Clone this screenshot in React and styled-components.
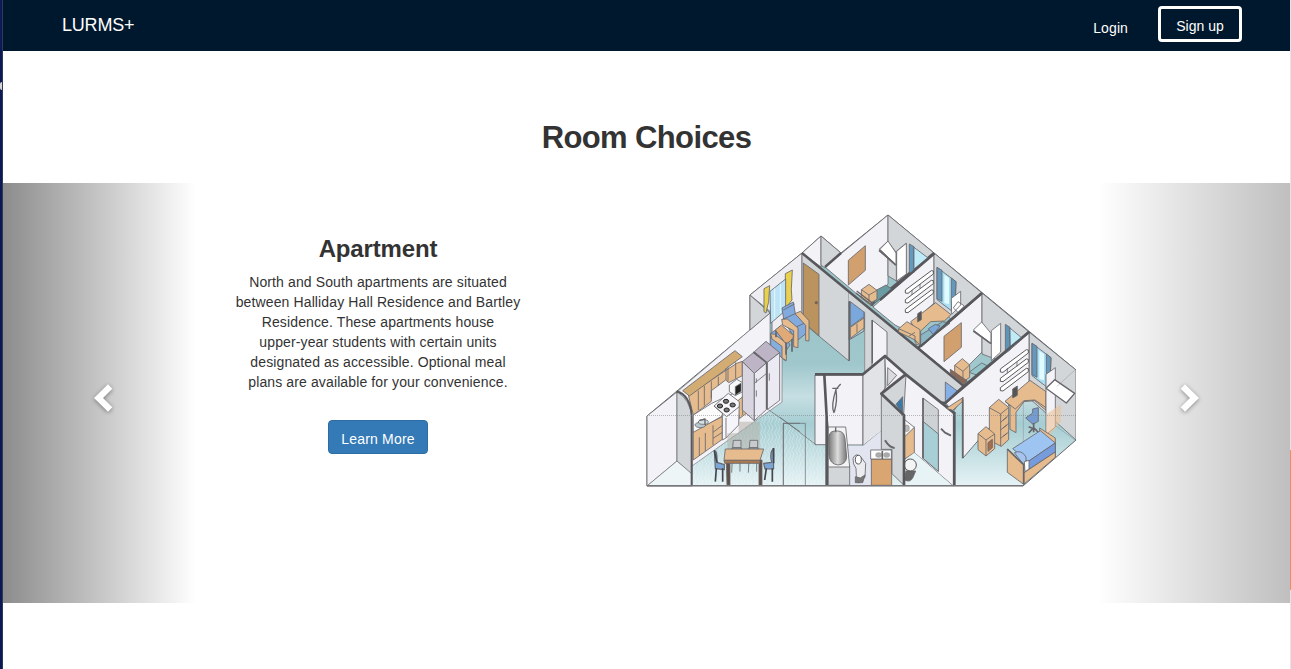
import React from 'react';
import styled, { createGlobalStyle } from 'styled-components';

const Global = createGlobalStyle`
  * { box-sizing: border-box; }
  body { margin: 0; background: #fff; color: #333; overflow: hidden;
    font: 14px/20px "Liberation Sans", Arial, sans-serif; }
`;
const Frame = styled.div`
  display: grid; grid-template-columns: 3px 1287px 1px; height: 669px;
`;
const LeftEdge = styled.div`
  background: #0b1a52; border-right: 1px solid #30385a; padding-top: 82px;
`;
const EdgeMark = styled.div`
  width: 2px; height: 8px; background: #d5d5d5; border-radius: 2px 0 0 2px;
`;
const RightEdge = styled.div`
  background: #e4e4e4; padding-top: 450px;
`;
const EdgeAccent = styled.div`height: 140px; background: #f58a5e;`;
const Page = styled.main`display: flex; flex-direction: column;`;
const Nav = styled.nav`
  height: 51px; background: #00182d; color: #fff; display: flex;
  align-items: flex-start; padding: 6px 48px 0 59px;
`;
const Brand = styled.a`font-size: 18px; margin-top: 9px; margin-right: auto; letter-spacing: -.2px;`;
const Login = styled.a`margin: 12px 30px 0 0; letter-spacing: .1px;`;
const SignUp = styled.a`
  width: 84px; height: 36px; border: 3px solid #fff; border-radius: 4px;
  text-align: center; line-height: 34px;
`;
const Title = styled.h1`
  margin: 70px 0 0; height: 62px; font-size: 31px; line-height: 34px; text-align: center;
  letter-spacing: -.62px;
`;
const Carousel = styled.section`
  height: 420px; display: grid; grid-template-columns: 193px 364px 86px 430px 21px 193px;
`;
const Control = styled.button`
  grid-row: 1; grid-column: ${p => (p.$next ? 6 : 1)};
  border: 0; padding: 0; display: flex; align-items: center;
  justify-content: ${p => (p.$next ? 'flex-end' : 'flex-start')};
  background: linear-gradient(to ${p => (p.$next ? 'left' : 'right')},
    rgba(0,0,0,${p => (p.$next ? 0.25 : 0.45)}), rgba(0,0,0,0));
`;
const Chevron = styled.svg`
  width: 20px; height: 30px; margin: 10px 90px 0; overflow: visible;
  filter: drop-shadow(0 1px 2px rgba(0,0,0,.4));
`;
const Copy = styled.article`
  display: flex; flex-direction: column; align-items: center; text-align: center; padding-top: 53px;
`;
const RoomName = styled.h2`margin: 0 0 10px; font-size: 24px; line-height: 26px; letter-spacing: -.15px;`;
const Description = styled.p`margin: 0 0 28px; white-space: nowrap; letter-spacing: .12px;`;
const LearnMore = styled.button`
  width: 100px; height: 34px; padding: 4px 0 0; border: 1px solid #2e6da4; border-radius: 4px;
  background: #337ab7; color: #fff; font: inherit; letter-spacing: .2px;
`;
const Plan = styled.svg`
  grid-row: 1; grid-column: 4; width: 430px; height: 274px; margin-top: 30px; display: block;
`;

const ink = '#66666b';
const wood = '#e6bb8d';
const white = '#f3f2f7';
const grey = '#d3d6d8';

const P = ({ d, f = 'none', s = ink, w = 2.5, ...rest }) => (
  <path d={d} fill={f} stroke={s} strokeWidth={w} strokeLinejoin="round" {...rest} />
);
const Area = ({ x, y, children }) => (
  <g transform={`translate(${x} ${y}) scale(.33333)`}>{children}</g>
);

const Walls = () => (
  <g>
    <P w={1} f="url(#floor)" d="M647 486V416L750 330V295L802 253L821 236L841 253L888 215L1076 370V440L1023 486Z" />
    <P w={.8} f={white} d="M647 416L677 392V461L647 486Z" />
    <P w={.6} f="#edf5f7" d="M647 486L677 461L692 473V486Z" />
    <P w={.6} f={white} d="M677 392L770 313V345L782 352V402L692 466Z" />
    <P w={.7} f={grey} d="M677 392Q690 399 692 418V474L677 461Z" />
    <P w={.8} f={grey} d="M750 295L770 313L750 330Z" />
    <P w={.8} f="#eeeef2" d="M750 295L802 253V322L772 346V313Z" />
    <P w={.8} f={grey} d="M802 253L849 291V361L802 322Z" />
    <P w={.8} f={white} d="M802 253L821 236V267Z" />
    <P w={.8} f={grey} d="M821 236L841 253L825 268L821 265Z" />
    <P w={.8} f={white} d="M825 267L888 215V284L871 306Z" />
    <P w={.8} f={grey} d="M888 215L934 253L900 283L888 276Z" />
    <P w={.8} f={white} d="M873 307L934 253V303L905 330L895 325Z" />
    <P w={.8} f={grey} d="M934 253L982 293L952 320L934 303Z" />
    <P w={.8} f={white} d="M918 347L982 293V352L962 372L950 374Z" />
    <P w={.8} f={grey} d="M982 293L1029 332L998 360L982 354Z" />
    <P w={.8} f={grey} d="M1029 332L1076 370V440L1056 422L1029 398Z" />
    <P w={.9} f={white} d="M945 402L1029 332V382L963 458V397L953 412Z" />
    <P w={.8} s="none" f={grey} d="M864 303L965 387L945 404L885 356L864 373Z" />
    <P w={.9} s="none" f={grey} d="M849 291L866 304V316L849 302Z" />
    <P w={.9} f="#add0dc" d="M849 302L864 314V331L849 340Z" />
    <P w={.9} f={white} d="M872 320L887 332V356L872 366Z" />
    <P w={2.5} s="#58585c" d="M802 253L965 387M825 267L841 253M871 305L934 253M918 348L982 293M937 402L945 403L1029 332" />
  </g>
);

const Kitchen = () => (
  <Area x={640} y={330}>
    <P f={wood} d="M145 195L290 100L307 94V137L266 158L257 150L214 182V214L160 255Z" />
    <P f="#d2ac72" d="M128 182L285 62L307 80L262 113L258 118L148 198Z" />
    <P d="M175 182V240M193 168V227M214 154V205M235 140V167M258 114V150M264 110V155M287 97V146" />
    <P f={wood} d="M160 303L247 260V328L160 390ZM291 211L327 184V244L298 266Z" />
    <P f="#fbfbfb" d="M160 255L215 220L315 174L327 184L295 211L250 235L247 258L160 307Z" />
    <P f="#f6f6fa" d="M222 228L265 190L298 215L296 285L258 324L247 330V250Z" />
    <g fill="#777" stroke="#222" strokeWidth="3">
      <ellipse cx="240" cy="228" rx="8" ry="6" /><ellipse cx="258" cy="214" rx="8" ry="6" />
      <ellipse cx="260" cy="240" rx="8" ry="6" /><ellipse cx="278" cy="225" rx="8" ry="6" />
    </g>
    <P d="M222 228L260 260L298 230M258 264V323" />
    <ellipse cx="181" cy="285" rx="16" ry="8" fill="#b8c7cd" stroke="#555" strokeWidth="2" />
    <ellipse cx="190" cy="276" rx="15" ry="7" fill="#d5e0e5" stroke="#555" strokeWidth="2" /><P w={4} d="M195 285V267L178 272" />
    <P d="M178 322V377M196 309V363M219 286V345M219 307L247 286M219 325L247 307M308 205V255" />
    <P f="#f8f8fa" d="M268 165L290 148L308 158V185L286 197L268 185Z" /><P f="#222" d="M286 170L303 160V184L286 195Z" />
    <P f="#bdb5c6" d="M307 95L340 68L380 98L343 130ZM343 65L378 34L419 68L381 98Z" />
    <P f="#d8d4e0" d="M307 95L343 130V272L307 240Z" />
    <P f="#ebe9f2" d="M343 130L380 98V238L343 272ZM382 97L419 68V211L382 239Z" />
    <P d="M343 160L380 130M349 145V158M349 181V200M388 130V152" /><P w={5} d="M340 66L380 98V238" />
    <P f="#b5b1a7" opacity=".55" s="none" d="M296 275H359V360H262V310H296Z" />
    <P d="M385 239L480 305M430 466V280H480" w={2} />
    {[278, 328].map(x => <g key={x} transform={`translate(${x} 329)`}>
      <P f="#c9c9d0" d="M0 24L2 2H25V24ZM-2 25H27L22 38H0ZM0 38L-3 99M22 38V96" /></g>)}
    <P f="#5f4f45" d="M259 390H270V465H261ZM357 390H366V465H357Z" />
    <P f={wood} d="M256 357H371L360 391H252Z" /><P f="#ad7950" d="M252 391H360V400H254Z" />
    <P f="#7ba7d8" w={3.5} d="M223 362Q232 360 231 397L253 404V419L226 416ZM399 356Q388 370 395 397L371 400L375 417H401Z" />
    <P w={5} s="#424650" d="M229 415L226 455M248 415V455M379 415L374 450M397 415V455M223 362L231 398M401 354V400" />
    <P w={6} s="#58585c" d="M110 184Q150 196 155 255V467" />
  </Area>
);

const Living = () => (
  <Area x={740} y={205}>
    <P f="#ead14d" d="M72 251L89 242L86 290L78 324L72 320ZM136 206L157 195L154 253L156 285L136 310Z" />
    <P f="#bde4f5" d="M90 259L137 222V316L92 355Z" /><P s="#e8faff" d="M104 250V341M121 237V325" />
    <P f="#bb935f" d="M190 174L237 208V393L190 350Z" /><circle cx="229" cy="293" r="5" fill="#765" />
    <P f="#85aedd" d="M92 385L121 365L150 420L136 440V467L92 430Z" />
    <P f="#82aadd" d="M126 309L160 291L166 326L205 347L205 380L170 408L132 349Z" />
    <P d="M130 315L164 297M128 343L166 326M160 370L203 350" />
    <P f={wood} d="M125 343L142 342L174 369V428L161 425V377L128 360ZM165 326L181 319L207 347V408L197 407V361ZM92 386L104 388L139 414V467L126 459V424L96 402Z" />
    <P f="#dfaa78" d="M106 375L124 360L161 392L157 404L138 417Z" /><P w={5} d="M108 378V397M138 412V449M156 402V440" />
    <P f="#d2a06f" d="M325 166L376 122V196L325 240Z" />
    <P f="#6b9ca4" d="M397 262L438 240L456 253L404 294Z" />
    <P f={wood} d="M364 254L387 238L411 256V283L388 296L364 279Z" /><P d="M364 254L387 270L411 256M387 270V291" />
    <P w={4} d="M348 264L400 304M350 258L402 298" />
    <P f="#fff" d="M417 133L443 109L469 143V180Z" /><P f="#f8f8fb" d="M469 139L498 115V207L469 228Z" /><P w={5} d="M417 136L468 180" />
    <P f="#7ba8dc" d="M331 290L372 321V335L331 365Z" /><P f={wood} d="M331 367L372 339V369L331 400Z" /><P d="M351 357V383" />
    <P w={4} d="M328 288V467M397 345V475" /><P w={2} d="M374 320V500" />
  </Area>
);

const Shelf = ({ x, y }) => (
  <g transform={`translate(${x} ${y})`}><P f="#fff" w={2.8} s="#505054" d="M0 65L78 7L84 8V17L8 75L0 74Z" /></g>
);
const Curtain = ({ x, y }) => (
  <g transform={`translate(${x} ${y})`}>
    <P f="#a9dff3" d="M0 0L57 43L55 106L43 130L0 97Z" /><P s="none" f="#e1faff" d="M22 22L36 32V111L22 107Z" />
    <P f="#6598bc" d="M0 0L15 9V102L0 94ZM43 32L57 43L55 90L43 130Z" />
  </g>
);
const Bedrooms = () => (
  <Area x={880} y={205}>
    <P f="#6299bd" d="M88 117L102 125V202L88 204Z" /><P f="#bfeaf8" d="M102 127L143 158L102 192Z" />
    <P f="#fff" d="M0 133L24 108L48 144V180ZM50 139L79 115V207L50 228Z" /><P w={5} d="M0 137L48 180" />
    <P d="M96 250V270M120 235V250" /><Shelf x={76} y={190} /><Shelf x={76} y={219} /><Shelf x={76} y={248} />
    <Curtain x={171} y={187} />
    <P f="#fff" d="M214 280L242 259V300L215 328ZM220 309L234 290L253 303L234 322Z" />
    <P f="#8bb7c4" d="M120 391L188 350L210 355L122 421Z" />
    <P f={wood} d="M92 350L167 293L213 329L193 348L152 350L122 378V414L108 420V378Z" />
    <P f={wood} d="M56 371L81 350L120 374V419L105 405L56 381Z" /><P d="M56 371L105 393V412M86 394L105 382" />
    <P f="#7aa8da" d="M145 371L166 358L180 363L160 389Z" /><P f="#555" d="M113 326L124 319V344L113 351Z" />
    <P f="#d2a06f" d="M192 394L244 353V427L192 470Z" />
    <P f="#fff" d="M280 375L305 351L333 385V416ZM334 377L362 355V441L334 467Z" /><P w={5} d="M280 378L333 416" />
    <P f="#5d95b8" d="M376 358L390 367V435L376 445Z" /><P f="#bfeaf8" d="M390 369L428 401L391 433Z" />
    <P f="#94c4ca" d="M267 502L305 474L323 483L290 510Z" />
    <P w={7} s="#58585c" d="M122 424L305 265M0 285L163 146" />
  </Area>
);

const Study = () => (
  <Area x={900} y={340}>
    <Shelf x={301} y={22} /><Shelf x={301} y={50} /><Shelf x={301} y={78} />
    <P d="M322 84V100M351 65V80" /><Curtain x={396} y={10} />
    <P f={wood} d="M315 184L390 121L438 155V211L404 182L372 185L348 217V278L330 268V198Z" />
    <P d="M315 184L346 207L372 182L405 180L438 203" /><P f="#555" d="M338 147L352 138V166L338 174Z" />
    <P f={wood} d="M268 203L296 178L326 202V299L304 319L268 301Z" />
    <P d="M268 203L302 222L326 202M302 222V319M302 247L326 225M302 270L326 250M302 295L326 276M309 241L321 232M309 264L321 255M309 289L321 280" />
    <P f={wood} d="M234 281L258 260L284 282V326L258 348L234 329Z" /><P d="M234 281L258 300L284 282M258 300V347" /><P f="#a86f4d" d="M264 308L277 298V323L264 334Z" />
    <P f="#759bd0" d="M377 234L398 219V207L415 203V244L399 253Z" /><P w={5} d="M401 249V277M386 279L401 263L420 282M386 260L410 270" />
    <P f={white} d="M438 103L466 83V261L438 284Z" /><P f="#ecc198" opacity=".6" s="none" d="M440 222L483 193V244L437 302Z" />
    <P f="#fff" w={4} d="M438 145L464 119L524 160L499 189Z" />
    <P w={1.5} opacity=".6" d="M370 184V330M470 140L525 90M466 257L525 300" />
    <P f={wood} d="M419 264L466 294V352L419 305Z" />
    <P f="#9ec4f1" d="M338 326L421 272L466 309L384 365Z" /><P f="#779cdd" d="M384 365L466 309V336L386 388Z" />
    <P f={wood} d="M322 327L371 374V433L322 397ZM371 399L466 336V352L371 433Z" /><P f="#a5c5ef" d="M343 338Q365 328 378 351V363L371 374Z" /><P f="#fff" d="M373 365L387 361V387L375 395Z" /><P w={5} d="M322 327L371 374V433" />
    <P f="#86afe5" d="M136 126L172 153L136 187Z" /><P f={wood} d="M139 205L187 174V185L158 211Z" />
    <P f={wood} d="M164 76L187 56L209 75V112L189 126L164 109Z" /><P d="M164 76L189 94L209 75M189 94V125" /><P f="#8c6756" d="M151 88L202 123L192 133L151 99Z" />
    <P w={5} d="M188 178V355" /><P w={7} s="#58585c" d="M135 190L190 139L387 -24" />
  </Area>
);

const Bathroom = () => (
  <Area x={780} y={345}>
    <P f={white} d="M105 90H249V300H151L142 220V299H105Z" />
    <P f="#e1e3e6" d="M249 87L315 36V250L249 302Z" />
    <P s="none" f="#e2e5f0" d="M205 302H249L303 258V422H209Z" />
    <P f={white} d="M315 36L520 203V423L403 323L374 343V250L304 146L318 125Z" />
    <P f="#d9dbde" d="M323 68L350 91L323 122Z" />
    <P f={grey} d="M304 146L378 89L371 210Z" />
    <P f={wood} d="M373 268L403 246V323L373 343Z" /><P f="#fafafa" d="M373 223L403 247L373 276Z" /><ellipse cx="380" cy="250" rx="8" ry="10" fill="#bbb" stroke="#555" />
    <P f="#3c79a5" d="M348 178L368 155V204Z" />
    <P f="#e7f3f5" s="none" d="M374 344L403 323L519 423H374Z" />
    <P f={grey} d="M145 363H209V421H145Z" /><P f="#f4f4f5" d="M145 246H197L209 366H145Z" />
    <P f="url(#tub)" d="M146 274Q151 255 173 258Q192 258 195 280L200 337Q198 358 174 360Q149 357 147 331Z" />
    <P w={4} d="M162 204Q152 183 168 133L182 117M157 130H175M168 136Q173 165 163 201M167 247V262" />
    <P f="#ececf0" d="M219 340Q228 320 244 338L257 355L255 397L236 414Q226 391 228 370Q218 358 219 340Z" /><P f="#777" d="M226 395L241 399L255 390L248 413H226Z" /><ellipse cx="235" cy="344" rx="9" ry="13" fill="#fff" stroke="#555" strokeWidth="3" />
    <P f="#d9a570" d="M274 342H335V421H274Z" /><P f="#fff" d="M272 315H334V342H272Z" /><ellipse cx="296" cy="330" rx="10" ry="8" fill="#aaa" /><ellipse cx="320" cy="330" rx="10" ry="8" fill="#aaa" /><P w={5} d="M307 318V342" />
    <P f={grey} d="M304 146L371 210V420L336 386V313H304Z" /><P w={6} d="M315 286Q328 308 344 309" />
    <P f="#666" d="M378 378H407L399 397Q391 414 374 405Z" /><ellipse cx="391" cy="360" rx="18" ry="18" fill="#f4f4f5" stroke="#555" strokeWidth="3" />
    <P f="#cfd2d4" d="M429 159L475 194V379L429 340Z" /><P f="#a8cfd5" d="M429 229L475 267V379L429 340Z" /><P w={5} d="M429 159V340" /><P w={6} d="M483 251L495 263L513 272" />
    <P w={8} s="#58585c" d="M105 88H249L315 33L377 88L524 205M377 88L304 146L372 211V423" />
    <P w={8} s="#58585c" d="M133 90L140 216V423M523 201V423" />
    <P d="M0 217L108 299M10 422V235H76V422" w={2} />
  </Area>
);

const FloorPlan = () => (
  <Plan viewBox="646 213 430 274" role="img" aria-label="Apartment floor plan">
    <defs>
      <linearGradient id="floor" x2="0" y2="1">
        <stop offset=".4" stopColor="#9cc5ca" /><stop offset=".55" stopColor="#9fc7cc" />
        <stop offset=".67" stopColor="#c6dfe3" /><stop offset=".77" stopColor="#a5cdd2" /><stop offset="1" stopColor="#e6f3f5" />
      </linearGradient>
      <linearGradient id="tub"><stop stopColor="#777" /><stop offset=".5" stopColor="#ddd" /><stop offset="1" stopColor="#777" /></linearGradient>
      <pattern id="ripple" width="7" height="9" patternUnits="userSpaceOnUse">
        <path d="M0 0L3 4L1 9M4 0L7 5L5 9" fill="none" stroke="#fff" strokeWidth=".7" opacity=".4" />
      </pattern>
    </defs>
    <Walls />
    <path d="M692 466L769 410L827 450V485H692Z" fill="url(#ripple)" />
    <Living /><Bedrooms /><Bathroom /><Kitchen /><Study />
    <P w={1} s="#77777b" d="M647 485.5H1023" />
    <P w={.7} s="#777" strokeDasharray="1 1" opacity=".7" d="M647 415.5H1076" />
  </Plan>
);

export default function App() {
  return (
    <>
      <Global />
      <Frame>
        <LeftEdge><EdgeMark /></LeftEdge>
        <Page>
          <Nav><Brand>LURMS+</Brand><Login>Login</Login><SignUp>Sign up</SignUp></Nav>
          <Title>Room Choices</Title>
          <Carousel>
            <Control aria-label="Previous">
              <Chevron viewBox="0 0 20 30"><path fill="#fff" d="M1 15L15 1.3L19.3 5.7L10 15L19.3 24.3L15 28.7Z" /></Chevron>
            </Control>
            <Copy>
              <RoomName>Apartment</RoomName>
              <Description>
                North and South apartments are situated<br />between Halliday Hall Residence and Bartley<br />
                Residence. These apartments house<br />upper-year students with certain units<br />
                designated as accessible. Optional meal<br />plans are available for your convenience.
              </Description>
              <LearnMore>Learn More</LearnMore>
            </Copy>
            <FloorPlan />
            <Control $next aria-label="Next">
              <Chevron viewBox="0 0 20 30"><path fill="#fff" d="M19 15L5 1.3L.7 5.7L10 15L.7 24.3L5 28.7Z" /></Chevron>
            </Control>
          </Carousel>
        </Page>
        <RightEdge><EdgeAccent /></RightEdge>
      </Frame>
    </>
  );
}
